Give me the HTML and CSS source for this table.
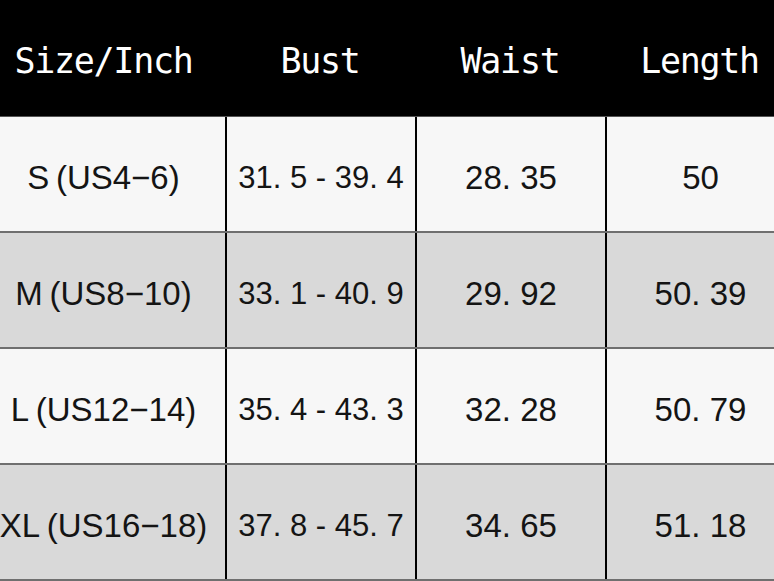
FILE: index.html
```html
<!DOCTYPE html>
<html lang="en">
<head>
<meta charset="utf-8">
<title>Size Chart</title>
<link rel="stylesheet" href="styles.css">
</head>
<body>
<div class="chart">
  <div class="row head">
    <div class="cell">Size/Inch</div>
    <div class="cell">Bust</div>
    <div class="cell">Waist</div>
    <div class="cell">Length</div>
  </div>
  <div class="row light">
    <div class="cell size">S<span class="par">(</span>US4−6)</div>
    <div class="cell bust">31<span class="pt">.</span>5 - 39<span class="pt">.</span>4</div>
    <div class="cell">28<span class="pt">.</span>35</div>
    <div class="cell">50</div>
  </div>
  <div class="row dark">
    <div class="cell size">M<span class="par">(</span>US8−10)</div>
    <div class="cell bust">33<span class="pt">.</span>1 - 40<span class="pt">.</span>9</div>
    <div class="cell">29<span class="pt">.</span>92</div>
    <div class="cell">50<span class="pt">.</span>39</div>
  </div>
  <div class="row light">
    <div class="cell size">L<span class="par">(</span>US12−14)</div>
    <div class="cell bust">35<span class="pt">.</span>4 - 43<span class="pt">.</span>3</div>
    <div class="cell">32<span class="pt">.</span>28</div>
    <div class="cell">50<span class="pt">.</span>79</div>
  </div>
  <div class="row dark">
    <div class="cell size">XL<span class="par">(</span>US16−18)</div>
    <div class="cell bust">37<span class="pt">.</span>8 - 45<span class="pt">.</span>7</div>
    <div class="cell">34<span class="pt">.</span>65</div>
    <div class="cell">51<span class="pt">.</span>18</div>
  </div>
</div>
</body>
</html>
```
FILE: styles.css
```css
html, body {
  margin: 0;
  padding: 0;
  background: #ffffff;
  overflow: hidden;
}

.chart {
  margin-left: -18px;
  width: 812px;
  font-family: "Liberation Sans", Arial, sans-serif;
  color: #141414;
}

.row {
  display: grid;
  grid-template-columns: 243px 190px 190px 189px;
  height: 116px;
  box-sizing: border-box;
}

.row.head {
  background: #000000;
  color: #ffffff;
  font-family: "DejaVu Sans Mono", monospace;
  height: 117px;
  border-bottom: 1px solid #555555;
}

.row.head .cell {
  border-left: none;
  font-size: 35px;
  letter-spacing: -1.3px;
  padding-top: 6px;
}

.row.light {
  background: #f7f7f7;
  border-bottom: 2px solid #6f6f6f;
}

.row.dark {
  background: #d9d9d9;
  border-bottom: 2px solid #6f6f6f;
}

.cell {
  display: flex;
  align-items: center;
  justify-content: center;
  font-size: 33px;
  white-space: nowrap;
  box-sizing: border-box;
  padding-top: 7px;
  border-left: 2px solid #000000;
}

.cell:first-child {
  border-left: none;
}

.cell.bust {
  font-size: 31px;
}

.pt {
  margin-right: 0.28em;
}

.par {
  margin-left: 0.2em;
}
```
